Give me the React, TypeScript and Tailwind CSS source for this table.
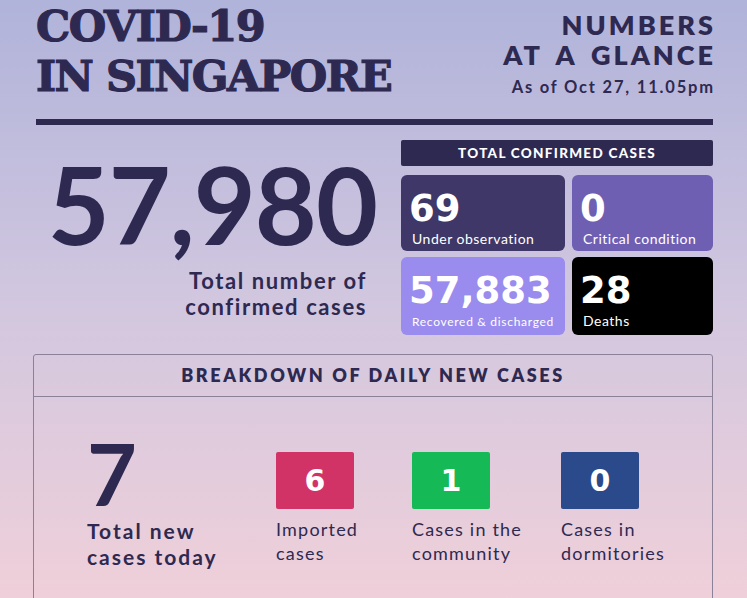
const cards = [
  { value: "69", label: "Under observation", bg: "bg-[#3e3768]", small: false },
  { value: "0", label: "Critical condition", bg: "bg-[#6e5fb2]", small: false },
  { value: "57,883", label: "Recovered & discharged", bg: "bg-[#9a8bee]", small: true },
  { value: "28", label: "Deaths", bg: "bg-black", small: false },
];

const daily = [
  { value: "6", lines: ["Imported", "cases"], bg: "bg-[#d23367]", width: "w-[136px]" },
  { value: "1", lines: ["Cases in the", "community"], bg: "bg-[#15ba56]", width: "w-[149px]" },
  { value: "0", lines: ["Cases in", "dormitories"], bg: "bg-[#2b4a8b]", width: "w-[120px]" },
];

export default function App() {
  return (
    <div className="min-h-[598px] w-[747px] overflow-hidden bg-gradient-to-b from-[#b0b3da] via-[#d2c7df] to-[#f1d0d9] text-[#2e2951] font-['Lato',sans-serif]">
      <div className="pl-[36px] pr-[34px] pt-[1px]">
        {/* Header */}
        <header className="flex items-start justify-between">
          <h1 className="font-['DejaVu_Serif',serif] font-bold text-[43px] leading-[50px] tracking-[-1.5px] [-webkit-text-stroke:1.2px_#2e2951]">
            COVID-19
            <br />
            IN SINGAPORE
          </h1>
          <div className="text-right pt-[9px]">
            <p className="font-extrabold text-[27px] leading-[30px] tracking-[3px] mr-[-3px]">NUMBERS</p>
            <p className="font-extrabold text-[27px] leading-[30px] tracking-[3px] [word-spacing:5px] mr-[-3px]">AT A GLANCE</p>
            <p className="font-bold text-[16.5px] leading-[20px] tracking-[1.8px] mr-[-1.8px] mt-[7px]">As of Oct 27, 11.05pm</p>
          </div>
        </header>

        <div className="h-[6px] bg-[#2e2951] mt-[18px]" />

        {/* Totals */}
        <section className="flex mt-[15px]">
          <div className="flex-1 flex flex-col items-end pr-[24px]">
            <p className="font-bold text-[107px] leading-[112px] tracking-[-1px] mt-[8px]">57,980</p>
            <p className="font-bold text-[22px] leading-[26px] tracking-[1.6px] text-right mt-[8px] mr-[10px]">
              Total number of
              <br />
              confirmed cases
            </p>
          </div>
          <div className="w-[312px]">
            <div className="h-[26px] bg-[#2e2951] rounded-[2px] flex items-center justify-center text-white font-black text-[13.5px] tracking-[1.3px]">
              TOTAL CONFIRMED CASES
            </div>
            <div className="grid grid-cols-[164px_141px] grid-rows-[76px_78px] gap-x-[7px] gap-y-[6px] mt-[9px]">
              {cards.map((c) => (
                <div key={c.label} className={`${c.bg} rounded-[6px] px-[8px] pt-[15px] text-white`}>
                  <p className="font-['DejaVu_Sans',sans-serif] font-bold text-[37px] leading-[37px]">{c.value}</p>
                  <p className={`${c.small ? "text-[12px] mt-[5px] tracking-[0.7px]" : "text-[14px] mt-[4px] tracking-[0.5px]"} leading-[16px] pl-[3px]`}>
                    {c.label}
                  </p>
                </div>
              ))}
            </div>
          </div>
        </section>

        {/* Breakdown */}
        <section className="mt-[19px] -ml-[3px] w-[680px] h-[260px] border border-[#8b8299] rounded-[3px]">
          <div className="h-[42px] border-b border-[#8b8299] flex items-center justify-center font-extrabold text-[18px] tracking-[2.6px]">
            BREAKDOWN OF DAILY NEW CASES
          </div>
          <div className="flex pl-[53px] pt-[38px]">
            <div className="w-[189px]">
              <p className="font-bold text-[86px] leading-[70px] mt-[3px]">7</p>
              <p className="font-bold text-[21px] leading-[26px] tracking-[2px] mt-[10px]">
                Total new
                <br />
                cases today
              </p>
            </div>
            {daily.map((d) => (
              <div key={d.lines[0]} className={`${d.width} pt-[17px]`}>
                <div className={`${d.bg} w-[78px] h-[57px] rounded-[2px] flex items-center justify-center text-white font-['DejaVu_Sans',sans-serif] font-bold text-[30px]`}>
                  {d.value}
                </div>
                <p className="text-[18px] leading-[24px] tracking-[1.2px] mt-[8px]">
                  {d.lines[0]}
                  <br />
                  {d.lines[1]}
                </p>
              </div>
            ))}
          </div>
        </section>
      </div>
    </div>
  );
}
